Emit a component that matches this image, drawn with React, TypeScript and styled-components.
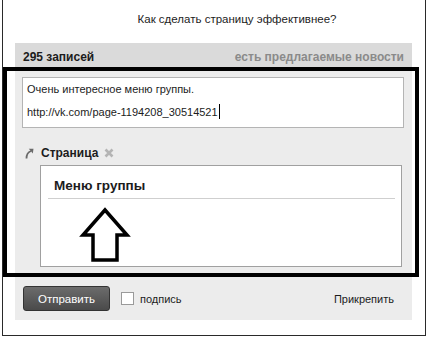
import { createGlobalStyle } from "styled-components";
import styled from "styled-components";

const GlobalStyle = createGlobalStyle`
  html, body {
    margin: 0;
    padding: 0;
    background: #fff;
  }
  body {
    font-family: "Liberation Sans", Arial, sans-serif;
    font-size: 11px;
    color: #1c1c1c;
  }
`;

export default function App() {
  return (
    <>
      <GlobalStyle />
      <Frame>
        <Title>Как сделать страницу эффективнее?</Title>
        <Panel>
          <PanelHeader>
            <PostCount>295 записей</PostCount>
            <SuggestedLink>есть предлагаемые новости</SuggestedLink>
          </PanelHeader>
          <PanelBody>
            <MessageBox>
              <MessageLine>Очень интересное меню группы.</MessageLine>
              <MessageLine>
                http://vk.com/page-1194208_30514521
                <Caret />
              </MessageLine>
            </MessageBox>
            <AttachmentRow>
              <LinkIcon viewBox="0 0 9 11" width={9} height={11}>
                <path d="M1.5 10.5 C1.5 6 3 4 6 3" stroke="#6a6a6a" strokeWidth="1.8" fill="none" />
                <path d="M3.8 0.8 L8.5 0.8 L7.8 5.6 Z" fill="#6a6a6a" />
              </LinkIcon>
              <AttachmentName>Страница</AttachmentName>
              <RemoveIcon viewBox="0 0 10 10" width={10} height={10}>
                <path d="M1.5 1.5 L8.5 8.5 M8.5 1.5 L1.5 8.5" stroke="#b4b4b4" strokeWidth="2.6" />
              </RemoveIcon>
            </AttachmentRow>
            <PagePreview>
              <PreviewTitle>Меню группы</PreviewTitle>
              <PointerArrow viewBox="0 0 52 58" width={52} height={58}>
                <path
                  d="M26 4 L4 29 L14 29 L14 54 L38 54 L38 29 L48 29 Z"
                  fill="#fff"
                  stroke="#000"
                  strokeWidth="3.5"
                  strokeLinejoin="miter"
                />
              </PointerArrow>
            </PagePreview>
          </PanelBody>
          <PanelFooter>
            <SendButton>Отправить</SendButton>
            <Checkbox />
            <CheckboxLabel>подпись</CheckboxLabel>
            <AttachLink>Прикрепить</AttachLink>
          </PanelFooter>
        </Panel>
        <Highlight />
      </Frame>
    </>
  );
}

const Frame = styled.div`
  position: relative;
  margin-left: 2px;
  width: 422px;
  height: 335px;
  border: 1px solid #2a2a2a;
  border-top: none;
  display: flex;
  flex-direction: column;
`;

const Title = styled.div`
  height: 43px;
  box-sizing: border-box;
  padding: 0 0 5px 46px;
  display: flex;
  align-items: center;
  justify-content: center;
  font-size: 11.5px;
  color: #1c1c1c;
`;

const Panel = styled.div`
  margin: 0 13px 0 12px;
  height: 277px;
  background: #ececec;
  display: flex;
  flex-direction: column;
`;

const PanelHeader = styled.div`
  height: 28px;
  padding: 0 8px;
  background: #dadada;
  display: flex;
  align-items: center;
  justify-content: space-between;
  font-size: 12px;
  font-weight: bold;
`;

const PostCount = styled.span`
  color: #1c1c1c;
`;

const SuggestedLink = styled.span`
  color: #8a8a8a;
`;

const PanelBody = styled.div`
  padding: 6px 8px 0 7px;
  display: flex;
  flex-direction: column;
`;

const MessageBox = styled.div`
  height: 51px;
  box-sizing: border-box;
  background: #fff;
  border: 1px solid #b4b4b4;
  padding: 0 4px;
  line-height: 23px;
`;

const MessageLine = styled.div`
  white-space: nowrap;
`;

const Caret = styled.span`
  display: inline-block;
  width: 1px;
  height: 15px;
  margin-left: 1px;
  background: #000;
  vertical-align: -3px;
`;

const AttachmentRow = styled.div`
  margin-top: 15px;
  height: 20px;
  display: flex;
  align-items: center;
  padding-left: 3px;
`;

const LinkIcon = styled.svg`
  margin-right: 7px;
`;

const AttachmentName = styled.span`
  font-weight: bold;
  font-size: 12px;
`;

const RemoveIcon = styled.svg`
  margin-left: 6px;
`;

const PagePreview = styled.div`
  position: relative;
  margin: 2px 2px 0 18px;
  height: 102px;
  box-sizing: border-box;
  background: #fff;
  border: 1px solid #a0a0a0;
`;

const PreviewTitle = styled.div`
  margin: 0 6px 0 7px;
  padding: 12px 6px 4px;
  line-height: 16px;
  font-size: 13.5px;
  font-weight: bold;
  border-bottom: 1px solid #cfcfcf;
`;

const PointerArrow = styled.svg`
  position: absolute;
  left: 38px;
  top: 40px;
`;

const PanelFooter = styled.div`
  margin-top: auto;
  padding: 0 18px 9px 8px;
  display: flex;
  align-items: center;
`;

const SendButton = styled.button`
  width: 87px;
  height: 25px;
  padding: 0;
  border: 1px solid #333;
  border-radius: 3px;
  background: linear-gradient(#6c6c6c, #4a4a4a);
  color: #fff;
  font-family: inherit;
  font-size: 11.5px;
`;

const Checkbox = styled.span`
  margin-left: 11px;
  width: 13px;
  height: 13px;
  box-sizing: border-box;
  background: #fff;
  border: 1px solid #9a9a9a;
`;

const CheckboxLabel = styled.span`
  margin-left: 6px;
`;

const AttachLink = styled.span`
  margin-left: auto;
`;

const Highlight = styled.div`
  position: absolute;
  left: 0;
  top: 67px;
  width: 416px;
  height: 210px;
  box-sizing: border-box;
  border: 4px solid #000;
  pointer-events: none;
`;
